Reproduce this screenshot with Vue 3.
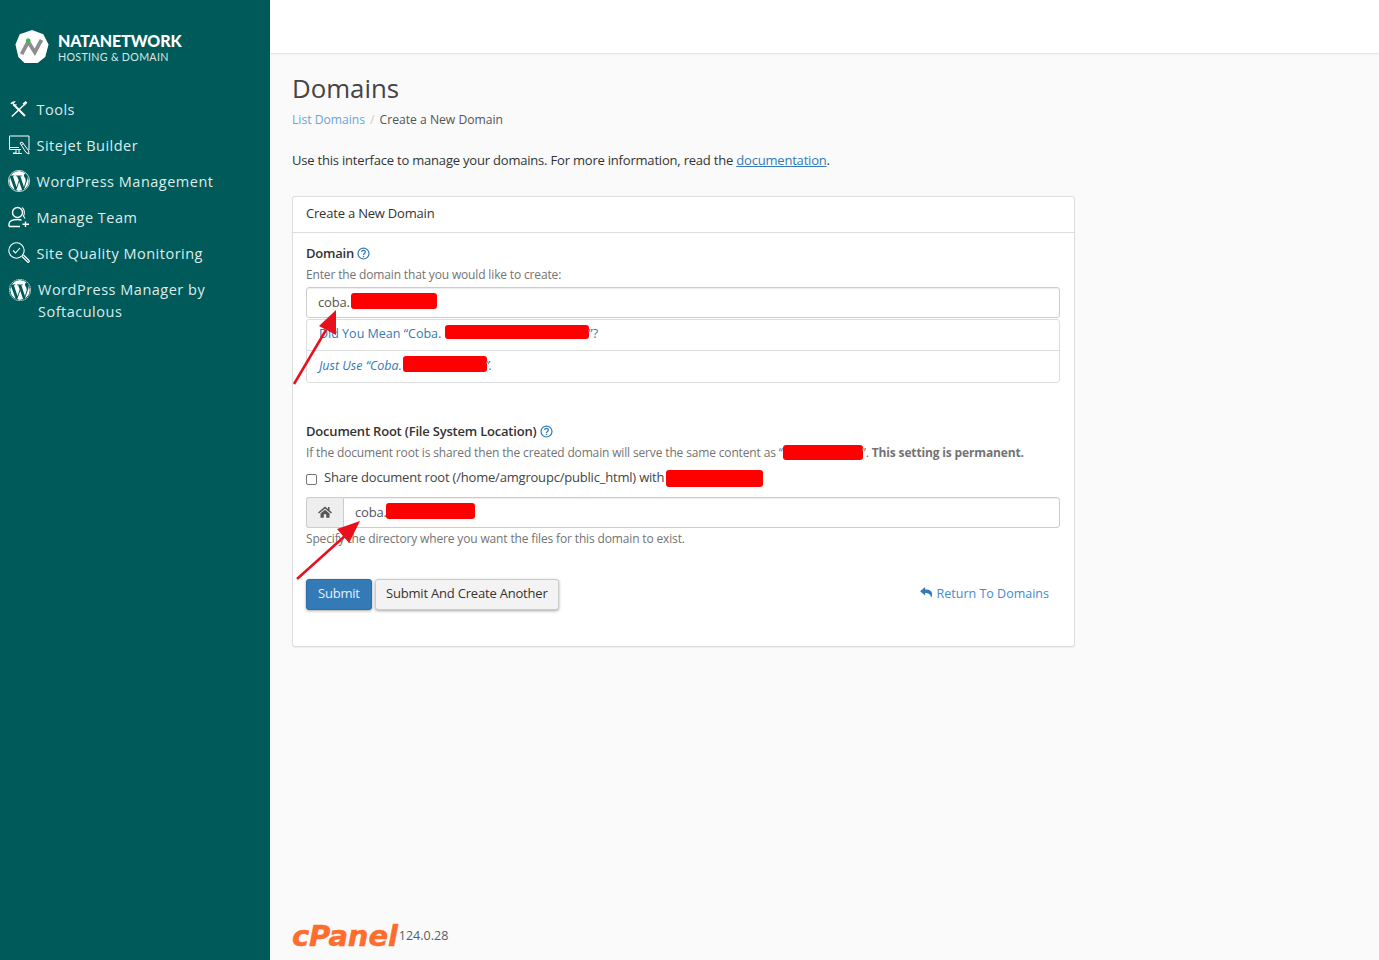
<script setup>
const wpPath = 'M21.469 6.825c.84 1.537 1.318 3.3 1.318 5.175 0 3.979-2.156 7.456-5.363 9.325l3.295-9.527c.615-1.54.82-2.771.82-3.864 0-.405-.026-.78-.07-1.11m-7.981.105c.647-.03 1.232-.105 1.232-.105.582-.075.514-.93-.067-.899 0 0-1.755.135-2.88.135-1.064 0-2.85-.15-2.85-.15-.585-.03-.661.855-.075.885 0 0 .54.061 1.125.09l1.68 4.605-2.37 7.08L5.354 6.9c.649-.03 1.234-.1 1.234-.1.585-.075.516-.93-.065-.896 0 0-1.746.138-2.874.138-.2 0-.438-.008-.69-.015C4.911 3.15 8.235 1.215 12 1.215c2.809 0 5.365 1.072 7.286 2.833-.046-.003-.091-.009-.141-.009-1.06 0-1.812.923-1.812 1.914 0 .89.513 1.643 1.06 2.531.411.72.89 1.643.89 2.977 0 .915-.354 1.994-.821 3.479l-1.075 3.585-3.9-11.61.001.014zM12 22.784c-1.059 0-2.081-.153-3.048-.437l3.237-9.406 3.315 9.087c.024.053.05.101.078.149-1.12.393-2.325.609-3.582.609M1.211 12c0-1.564.336-3.05.935-4.39L7.29 21.709C3.694 19.96 1.212 16.271 1.211 12M12 0C5.385 0 0 5.385 0 12s5.385 12 12 12 12-5.385 12-12S18.615 0 12 0'
const nav = [
  { label: 'Tools', icon: 'tools' },
  { label: 'Sitejet Builder', icon: 'sitejet' },
  { label: 'WordPress Management', icon: 'wp' },
  { label: 'Manage Team', icon: 'team' },
  { label: 'Site Quality Monitoring', icon: 'quality' },
]
</script>

<template>
  <div class="layout">
    <aside class="sidebar">
      <div class="brand">
        <svg class="brand-mark" viewBox="0 0 36 36" width="34" height="35">
          <polygon points="18,0.5 30,5 35.500,16 32,29 24,35.500 10,35.500 3.500,29 0.500,16 5,5" fill="#fff" />
          <path d="M7 26 L14 13 L21 24 L28 11" fill="none" stroke="#8e8e8e" stroke-width="4" />
          <circle cx="14" cy="12" r="2.500" fill="#3fb54a" />
        </svg>
        <div class="brand-text">
          <div class="brand-name">NATANETWORK</div>
          <div class="brand-sub">HOSTING &amp; DOMAIN</div>
        </div>
      </div>
      <nav class="nav">
        <a v-for="item in nav" :key="item.label" class="nav-item">
          <span class="nav-icon">
            <svg v-if="item.icon === 'tools'" viewBox="0 0 22 22" width="22" height="22" fill="none" stroke="#fff">
              <path d="M5.500 6.500 L17 18" stroke-width="2" />
              <path d="M3 6 C3.500 4.500 4.500 3.800 6.500 3.800 L5 5.500 L6.500 7.500 L8.500 6.500" stroke-width="1.200" />
              <path d="M18 5 L3.800 18.500" stroke-width="1.400" />
              <path d="M15.500 6.500 L18.500 3.800" stroke-width="2.400" />
            </svg>
            <svg v-else-if="item.icon === 'sitejet'" viewBox="0 0 22 22" width="22" height="22" fill="none" stroke="#fff" stroke-width="1">
              <path d="M13 15.500 H1.500 V2 H21 V16" />
              <path d="M1.500 13.500 H11 M8 15.500 V19 H5 M5 19.500 H14 M11 15.500 V19" />
              <path d="M12 9 L14 8 L20.500 16.500 L21 20 L18 18.500 Z M13.500 11 L15.500 9.500" />
            </svg>
            <svg v-else-if="item.icon === 'wp'" viewBox="0 0 24 24" width="22" height="22">
              <circle cx="12" cy="12" r="10.800" fill="#fff" />
              <path :d="wpPath" fill="#005a5a" />
              <circle cx="12" cy="12" r="11.600" fill="none" stroke="#fff" stroke-width=".8" />
            </svg>
            <svg v-else-if="item.icon === 'team'" viewBox="0 0 22 22" width="22" height="22" fill="none" stroke="#fff" stroke-width="1.400">
              <circle cx="9.500" cy="6.500" r="5" />
              <path d="M14 1.500 C16.500 3 17 7 15.500 10 L17 12.500" stroke-width="1.100" />
              <path d="M1 20.500 V18 C1 15 4.500 13.500 9.500 13.500 C11 13.500 12.500 13.700 13.500 14 M1 20.500 H12" />
              <path d="M17.500 15.500 V21 M14.500 18.300 H21" />
            </svg>
            <svg v-else viewBox="0 0 22 22" width="22" height="22" fill="none" stroke="#fff" stroke-width="1.100">
              <circle cx="8.500" cy="8.500" r="7.700" />
              <path d="M5 8.500 L7.500 11 L12 6" />
              <path d="M14 14.500 L20 20.500 A1.300 1.300 0 0 0 21 18.500 L15.500 13" stroke-width="1.200" />
            </svg>
          </span>
          <span class="nav-label">{{ item.label }}</span>
        </a>
        <a class="nav-item nav-item-wrap">
          <span class="nav-icon">
            <svg viewBox="0 0 24 24" width="22" height="22">
              <circle cx="12" cy="12" r="10.800" fill="#fff" />
              <path :d="wpPath" fill="#005a5a" />
              <circle cx="12" cy="12" r="11.600" fill="none" stroke="#fff" stroke-width=".8" stroke-dasharray="2 .6" />
            </svg>
          </span>
          <span class="nav-label">WordPress Manager by Softaculous</span>
        </a>
      </nav>
    </aside>

    <div class="content">
      <header class="topbar"></header>
      <main class="main">
        <h1 class="title">Domains</h1>
        <div class="crumbs">
          <a class="crumb-link">List Domains</a>
          <span class="crumb-sep">/</span>
          <span>Create a New Domain</span>
        </div>
        <p class="intro">Use this interface to manage your domains. For more information, read the <a class="doc-link">documentation</a>.</p>

        <section class="card">
          <div class="card-head">Create a New Domain</div>
          <div class="card-body">
            <div class="field-label">Domain
              <svg class="help" viewBox="0 0 14 14" width="13" height="13" fill="none" stroke="#337ab7"><circle cx="7" cy="7" r="5.900" stroke-width="1.300"/><path d="M5 5.500 C5 3 9 3 9 5.500 C9 7 7 7 7 8.500" stroke-width="1.400"/><path d="M7 9.500 V11" stroke-width="1.500"/></svg>
            </div>
            <div class="hint">Enter the domain that you would like to create:</div>
            <div class="input domain-input">coba.<span class="redact r-input"></span></div>
            <div class="suggest">
              <div class="suggest-row">Did You Mean “Coba.<span class="redact r-mean"></span>”?</div>
              <div class="suggest-row italic">Just Use “Coba.<span class="redact r-use"></span>”.</div>
            </div>

            <div class="field-label root-label">Document Root (File System Location)
              <svg class="help" viewBox="0 0 14 14" width="13" height="13" fill="none" stroke="#337ab7"><circle cx="7" cy="7" r="5.900" stroke-width="1.300"/><path d="M5 5.500 C5 3 9 3 9 5.500 C9 7 7 7 7 8.500" stroke-width="1.400"/><path d="M7 9.500 V11" stroke-width="1.500"/></svg>
            </div>
            <div class="hint">If the document root is shared then the created domain will serve the same content as “<span class="redact r-as"></span>”. <b>This setting is permanent.</b></div>
            <label class="check-row">
              <input type="checkbox" class="check" />
              <span>Share document root (/home/amgroupc/public_html) with <span class="redact r-with"></span></span>
            </label>
            <div class="input-group">
              <span class="addon">
                <svg viewBox="0 0 14 12" width="14" height="12" fill="#555"><path d="M7 .5 L0 6.500 L1 7.500 L7 2.500 L13 7.500 L14 6.500 L11.500 4.300 V1 H10 V3 Z M2.500 7.500 V11.700 H5.800 V8.300 H8.200 V11.700 H11.500 V7.500 L7 3.700 Z"/></svg>
              </span>
              <div class="input group-input">coba.<span class="redact r-root"></span></div>
            </div>
            <div class="hint specify">Specify the directory where you want the files for this domain to exist.</div>

            <div class="actions">
              <button class="btn btn-primary">Submit</button>
              <button class="btn btn-default">Submit And Create Another</button>
              <a class="return">
                <svg viewBox="0 0 14 12" width="13" height="11" fill="#337ab7"><path d="M5.500 0 L0 4.700 L5.500 9.400 V6.500 C9 6.500 11.500 7.500 12 11.800 C14.500 7 13 2.800 5.500 2.800 Z"/></svg>
                Return To Domains
              </a>
            </div>
          </div>
        </section>

        <footer class="footer">
          <span class="cpanel">cPanel</span>
          <span class="version">124.0.28</span>
        </footer>
      </main>
    </div>

    <svg class="arrows" width="1379" height="960" viewBox="0 0 1379 960">
      <g fill="#e8101c" stroke="#e8101c">
        <path d="M294 384 L326 330" stroke-width="2.500" fill="none" />
        <polygon points="336,310 336,335 319,326" stroke="none" />
        <path d="M297 579 L346 535" stroke-width="2.500" fill="none" />
        <polygon points="360,521 349,543 337,529" stroke="none" />
      </g>
    </svg>
  </div>
</template>

<style>
html, body { margin: 0; padding: 0; }
</style>

<style scoped>
.layout {
  position: relative;
  display: flex;
  width: 1379px;
  height: 960px;
  overflow: hidden;
  font-family: "Open Sans", sans-serif;
  font-size: 13px;
  letter-spacing: -0.2px;
  color: #333;
  background: #fafafa;
}
.sidebar {
  flex: 0 0 270px;
  background: #005a5a;
  color: #e4f0ef;
  box-sizing: border-box;
  padding-top: 28px;
}
.brand {
  display: flex;
  align-items: center;
  gap: 9px;
  padding-left: 15px;
  height: 37px;
}
.brand-mark { flex: none; }
.brand-text { padding-top: 2px; }
.brand-name {
  font-family: Lato, sans-serif;
  font-weight: 900;
  font-size: 16px;
  line-height: 17px;
  color: #fff;
  letter-spacing: -0.1px;
}
.brand-sub {
  font-family: Lato, sans-serif;
  font-size: 10.700px;
  line-height: 12px;
  margin-top: 2px;
  color: #d5e6e5;
  letter-spacing: 0.3px;
  white-space: nowrap;
}
.nav {
  margin-top: 26px;
  display: flex;
  flex-direction: column;
}
.nav-item {
  display: flex;
  align-items: center;
  height: 36px;
  padding-left: 8px;
  font-size: 14.500px;
  letter-spacing: 0.5px;
  color: #dcecea;
}
.nav-icon {
  flex: 0 0 22px;
  height: 22px;
  margin-right: 6.500px;
}
.nav-icon svg { display: block; }
.nav-item-wrap {
  height: auto;
  align-items: flex-start;
  padding-left: 9px;
  padding-top: 8px;
  line-height: 22px;
}
.nav-item-wrap .nav-icon { margin-right: 7px; margin-top: 0; }
.nav-item-wrap .nav-label { width: 190px; }
.content {
  flex: 1;
  display: flex;
  flex-direction: column;
  min-width: 0;
}
.topbar {
  flex: 0 0 53px;
  background: #fff;
  border-bottom: 1px solid #e6e6e6;
  box-shadow: 0 1px 2px rgba(0,0,0,.04);
}
.main {
  flex: 1;
  display: flex;
  flex-direction: column;
  padding: 0 22px;
  min-height: 0;
}
.title {
  margin: 16px 0 0;
  font-size: 25.800px;
  font-weight: 400;
  line-height: 36px;
  letter-spacing: 0;
  color: #444;
}
.crumbs {
  margin-top: 4px;
  height: 20px;
  line-height: 20px;
  font-size: 12.150px;
  letter-spacing: 0;
  color: #555;
}
.crumb-link { color: #6aa5d6; }
.crumb-sep { color: #ccc; margin: 0 5px; }
.intro {
  margin: 20px 0 0;
  line-height: 20px;
  color: #333;
}
.doc-link { color: #337ab7; text-decoration: underline; }
.card {
  margin-top: 26px;
  width: 783px;
  height: 451px;
  box-sizing: border-box;
  background: #fff;
  border: 1px solid #ddd;
  border-radius: 3px;
  box-shadow: 0 1px 1px rgba(0,0,0,.05);
}
.card-head {
  height: 35px;
  line-height: 33px;
  padding-left: 13px;
  border-bottom: 1px solid #ddd;
  color: #333;
}
.card-body { padding: 10px 14px 0 13px; }
.field-label {
  height: 21px;
  line-height: 21px;
  font-weight: 600;
  color: #333;
}
.help { vertical-align: -2px; margin-left: 0; }
.hint {
  height: 20px;
  line-height: 21px;
  font-size: 12px;
  letter-spacing: -0.15px;
  color: #737373;
  white-space: nowrap;
}
.input {
  box-sizing: border-box;
  height: 31px;
  line-height: 29px;
  padding-left: 11px;
  background: #fff;
  border: 1px solid #ccc;
  border-radius: 3px;
  box-shadow: inset 0 1px 1px rgba(0,0,0,.075);
  color: #555;
}
.domain-input { margin-top: 3px; }
.redact {
  display: inline-block;
  background: #fe0000;
  border-radius: 3px;
}
.r-input { width: 86px; height: 16px; margin-left: 1px; vertical-align: -2px; }
.r-mean { width: 144px; height: 14px; margin-left: 4px; margin-right: -1px; vertical-align: -1px; }
.r-use { width: 84px; height: 16px; margin-left: 1px; margin-right: -2px; vertical-align: -2px; }
.r-as { width: 80px; height: 15px; margin-right: -1px; vertical-align: -3px; }
.r-with { width: 97px; height: 17px; margin-left: -1px; vertical-align: -5px; }
.r-root { width: 89px; height: 16px; margin-left: -1px; vertical-align: -2px; }
.suggest {
  margin-top: 1px;
  box-sizing: border-box;
  height: 64px;
  border: 1px solid #ddd;
  border-radius: 3px;
  color: #337ab7;
  font-size: 12.500px;
  letter-spacing: 0;
}
.suggest-row {
  height: 31px;
  line-height: 28px;
  padding-left: 12px;
  box-sizing: border-box;
  border-bottom: 1px solid #ddd;
}
.suggest-row.italic {
  border-bottom: 0;
  font-style: italic;
  line-height: 29px;
}
.root-label { margin-top: 38px; }
.check-row {
  display: flex;
  align-items: center;
  height: 20px;
  margin-top: 5px;
  color: #444;
  white-space: nowrap;
}
.check {
  margin: 4px 7px 0 0;
  width: 11px;
  height: 11px;
  appearance: none;
  background: #fff;
  border: 1px solid #767676;
  border-radius: 2px;
}
.input-group {
  display: flex;
  margin-top: 10px;
  height: 31px;
}
.addon {
  flex: 0 0 37px;
  box-sizing: border-box;
  display: flex;
  align-items: center;
  justify-content: center;
  padding-bottom: 2px;
  background: #eee;
  border: 1px solid #ccc;
  border-right: 0;
  border-radius: 3px 0 0 3px;
}
.group-input { flex: 1; border-radius: 0 3px 3px 0; }
.specify { margin-top: 0; }
.actions {
  display: flex;
  align-items: center;
  margin-top: 31px;
  gap: 3px;
}
.btn {
  box-sizing: border-box;
  height: 31px;
  padding: 0 11px 3px;
  font-family: inherit;
  font-size: 13px;
  letter-spacing: -0.2px;
  border-radius: 3px;
  box-shadow: 0 1px 3px rgba(0,0,0,.35);
}
.btn-primary { background: #337ab7; border: 1px solid #2e6da4; color: #e6f0fa; }
.btn-default { width: 184px; padding: 0 0 3px; background: #f3f3f3; border: 1px solid #ccc; color: #333; }
.return {
  margin: 0 11px 2px auto;
  color: #428bca;
  font-size: 12.500px;
  letter-spacing: 0;
  white-space: nowrap;
}
.footer {
  margin-top: auto;
  height: 49px;
  display: flex;
  align-items: center;
}
.cpanel {
  font-family: "DejaVu Sans", sans-serif;
  font-weight: 700;
  font-style: italic;
  font-size: 29px;
  line-height: 30px;
  letter-spacing: -0.1px;
  -webkit-text-stroke: 0.5px #ff6c2c;
  color: #ff6c2c;
}
.version {
  margin-left: 1px;
  font-size: 12.500px;
  letter-spacing: 0;
  color: #555e6a;
}
.arrows {
  position: absolute;
  left: 0;
  top: 0;
  pointer-events: none;
}
</style>
